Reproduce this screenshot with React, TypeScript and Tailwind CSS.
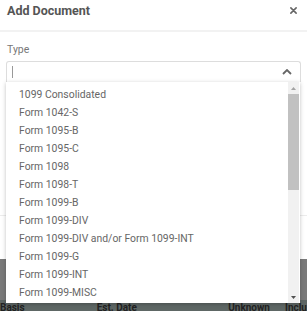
import React from "react";

const OPTIONS = [
  "1099 Consolidated",
  "Form 1042-S",
  "Form 1095-B",
  "Form 1095-C",
  "Form 1098",
  "Form 1098-T",
  "Form 1099-B",
  "Form 1099-DIV",
  "Form 1099-DIV and/or Form 1099-INT",
  "Form 1099-G",
  "Form 1099-INT",
  "Form 1099-MISC",
];

const App = () => {
  return (
    <div
      className="relative w-[307px] h-[311px] overflow-hidden bg-white"
      style={{ fontFamily: "Roboto, 'Liberation Sans', sans-serif" }}
    >
      {/* modal */}
      <div className="flex h-[30px] items-start justify-between pl-[7px] pr-[10px] pt-[3px]">
        <h2 className="text-[12.5px] font-bold text-[#555] leading-[15px]">Add Document</h2>
        <svg width="7" height="7" viewBox="0 0 8 8" className="mt-[4px] text-[#666]">
          <path d="M1 1L7 7M7 1L1 7" stroke="currentColor" strokeWidth="1.8" strokeLinecap="round" />
        </svg>
      </div>
      <div className="h-[2px] bg-[#f2f2f2]" />
      <div className="px-[6px] pt-[11px]">
        <div className="pl-px text-[10.5px] text-[#777] leading-[14px]">Type</div>
        <div className="relative mt-[4px] flex h-[21px] items-center justify-between rounded-t-[3px] border border-b-0 border-[#ddd] pl-[5px] pr-[8px]">
          <div className="h-[12px] w-px bg-[#999]" />
          <svg width="10" height="6" viewBox="0 0 10 6" className="text-[#666]">
            <path d="M1 5L5 1L9 5" stroke="currentColor" strokeWidth="1.8" fill="none" />
          </svg>

          {/* dropdown menu */}
          <div className="absolute left-[-1px] top-[20px] flex h-[221px] w-[294px] bg-white shadow-[0_1px_4px_rgba(0,0,0,0.25)]">
            <ul className="flex-1 overflow-hidden pt-[4px] pl-[13px]">
              {OPTIONS.map((o) => (
                <li key={o} className="h-[18px] text-[10.4px] leading-[18px] text-[#666]">
                  {o}
                </li>
              ))}
            </ul>
            <div className="mr-[1px] flex w-[11px] flex-col bg-[#f1f1f1]">
              <div className="flex h-[12px] items-center justify-center">
                <svg width="5" height="3" viewBox="0 0 5 3">
                  <path d="M0 3L2.5 0L5 3Z" fill="#a3a3a3" />
                </svg>
              </div>
              <div className="h-[96px] bg-[#c1c1c1]" />
              <div className="flex-1" />
              <div className="flex h-[12px] items-center justify-center">
                <svg width="5" height="3" viewBox="0 0 5 3">
                  <path d="M0 0L5 0L2.5 3Z" fill="#505050" />
                </svg>
              </div>
            </div>
          </div>
        </div>
      </div>

      {/* modal footer divider + page behind */}
      <div className="mt-[133px] h-px bg-[#ececec]" />
      <div className="h-[43px]" />
      <div className="h-[41px] bg-[#7a7a7a]" />
      <div className="flex h-[12px] items-start bg-[#5e6765] pt-[2px] text-[10px] font-bold leading-[12px] text-[#222]">
        <span className="w-[97px]">Basis</span>
        <span className="w-[132px]">Est. Date</span>
        <span className="w-[57px]">Unknown</span>
        <span>Inclu</span>
      </div>
    </div>
  );
};

export default App;
